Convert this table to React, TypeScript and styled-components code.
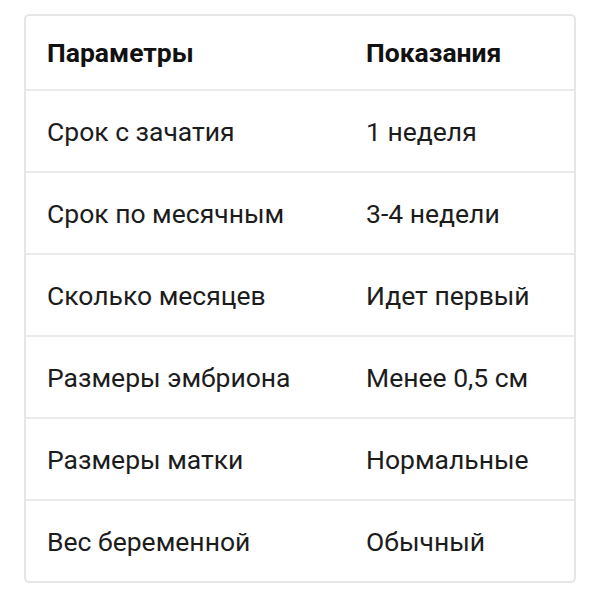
import { FC } from "react";
import styled, { createGlobalStyle } from "styled-components";

const GlobalStyle = createGlobalStyle`
  html, body {
    margin: 0;
    padding: 0;
    background: #ffffff;
  }
  body {
    font-family: Roboto, "Noto Sans", Arial, sans-serif;
    color: #1a1a1a;
  }
`;

const SPage = styled.div`
  width: 600px;
  height: 601px;
  padding: 14px 24px 0 24px;
  box-sizing: border-box;
`;

const SCard = styled.div`
  border: 2px solid #e6e6e6;
  border-radius: 5px;
  overflow: hidden;
`;

const SRow = styled.div<{ $header?: boolean; $last?: boolean }>`
  display: grid;
  grid-template-columns: 319px 1fr;
  height: ${({ $header }) => ($header ? "73px" : "80px")};
  align-items: center;
  border-bottom: ${({ $last }) => ($last ? "none" : "2px solid #ebebeb")};
`;

const SCell = styled.div<{ $header?: boolean }>`
  padding-left: 21px;
  font-size: 26.5px;
  font-weight: ${({ $header }) => ($header ? 700 : 400)};
  color: ${({ $header }) => ($header ? "#111111" : "#1c1c1c")};
  white-space: nowrap;
`;

const rows: [string, string][] = [
  ["Срок с зачатия", "1 неделя"],
  ["Срок по месячным", "3-4 недели"],
  ["Сколько месяцев", "Идет первый"],
  ["Размеры эмбриона", "Менее 0,5 см"],
  ["Размеры матки", "Нормальные"],
  ["Вес беременной", "Обычный"],
];

const App: FC = () => {
  return (
    <SPage>
      <GlobalStyle />
      <SCard>
        <SRow $header>
          <SCell $header>Параметры</SCell>
          <SCell $header>Показания</SCell>
        </SRow>
        {rows.map(([param, value], i) => (
          <SRow key={param} $last={i === rows.length - 1}>
            <SCell>{param}</SCell>
            <SCell>{value}</SCell>
          </SRow>
        ))}
      </SCard>
    </SPage>
  );
};

export default App;
